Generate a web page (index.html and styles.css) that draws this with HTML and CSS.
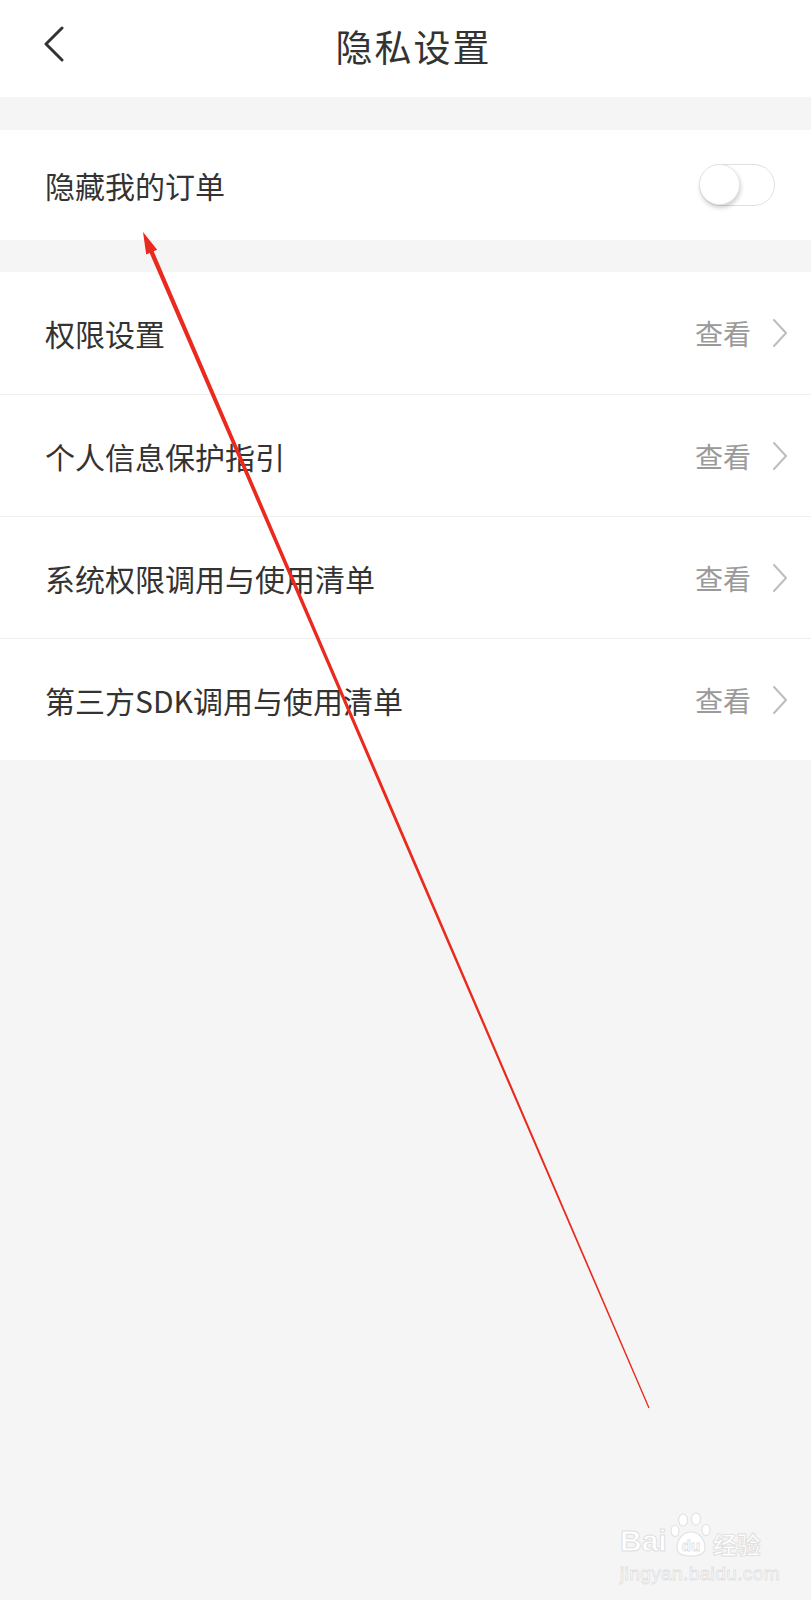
FILE: index.html
```html
<!DOCTYPE html>
<html lang="zh-CN">
<head>
<meta charset="utf-8">
<title>隐私设置</title>
<link rel="stylesheet" href="styles.css">
</head>
<body>
<div class="page">
  <header class="topbar">
    <svg class="back" width="24" height="36" viewBox="0 0 24 36"><polyline points="21,2 5,18 21,34" fill="none" stroke="#333" stroke-width="3" stroke-linecap="round" stroke-linejoin="round"/></svg>
    <h1 class="title">隐私设置</h1>
  </header>

  <section class="group group-first">
    <div class="row">
      <span class="label">隐藏我的订单</span>
      <span class="switch"><span class="knob"></span></span>
    </div>
  </section>

  <section class="group">
    <div class="row row-link">
      <span class="label">权限设置</span>
      <span class="action">查看<svg class="chev" width="16" height="30" viewBox="0 0 16 30"><polyline points="2,2 14,15 2,28" fill="none" stroke="#bdbdbd" stroke-width="2" stroke-linecap="round" stroke-linejoin="round"/></svg></span>
    </div>
    <div class="row row-link">
      <span class="label">个人信息保护指引</span>
      <span class="action">查看<svg class="chev" width="16" height="30" viewBox="0 0 16 30"><polyline points="2,2 14,15 2,28" fill="none" stroke="#bdbdbd" stroke-width="2" stroke-linecap="round" stroke-linejoin="round"/></svg></span>
    </div>
    <div class="row row-link">
      <span class="label">系统权限调用与使用清单</span>
      <span class="action">查看<svg class="chev" width="16" height="30" viewBox="0 0 16 30"><polyline points="2,2 14,15 2,28" fill="none" stroke="#bdbdbd" stroke-width="2" stroke-linecap="round" stroke-linejoin="round"/></svg></span>
    </div>
    <div class="row row-link">
      <span class="label">第三方SDK调用与使用清单</span>
      <span class="action">查看<svg class="chev" width="16" height="30" viewBox="0 0 16 30"><polyline points="2,2 14,15 2,28" fill="none" stroke="#bdbdbd" stroke-width="2" stroke-linecap="round" stroke-linejoin="round"/></svg></span>
    </div>
  </section>

  <svg class="annotation" width="811" height="1600" viewBox="0 0 811 1600">
    <polygon points="143,232 157.2,249.8 153.7,251.3 649.6,1407.8 648.4,1408.2 149.7,253.1 146.2,254.6" fill="#ea2a1f"/>
  </svg>

  <div class="watermark">
    <div class="wm-top">
      <span class="wm-bai">Bai</span>
      <svg class="wm-paw" width="44" height="46" viewBox="0 0 44 46">
        <g fill="#fff" stroke="#e2e2e2" stroke-width="1.2">
          <ellipse cx="14" cy="8" rx="4.5" ry="6"/>
          <ellipse cx="27" cy="7" rx="4.5" ry="6"/>
          <ellipse cx="6" cy="19" rx="4" ry="5.5"/>
          <ellipse cx="37" cy="18" rx="4" ry="5.5"/>
          <path d="M8 36 C8 26 15 20 22 20 C29 20 36 26 36 36 C36 42 30 44 22 44 C14 44 8 42 8 36 Z"/>
        </g>
        <text x="22" y="39" text-anchor="middle" class="wm-du">du</text>
      </svg>
      <span class="wm-jy">经验</span>
    </div>
    <div class="wm-url">jingyan.baidu.com</div>
  </div>
</div>
</body>
</html>
```

FILE: styles.css
```css
* { box-sizing: border-box; }
html, body { margin: 0; padding: 0; }
body {
  background: #f5f5f5;
  font-family: "Noto Sans CJK SC", "Noto Sans", sans-serif;
  color: #333;
}
.page {
  position: relative;
  width: 811px;
  height: 1600px;
  overflow: hidden;
  background: #f5f5f5;
}
.topbar {
  position: relative;
  height: 97px;
  background: #fff;
  display: flex;
  align-items: center;
  justify-content: center;
  padding-bottom: 6px;
}
.back {
  position: absolute;
  left: 41px;
  top: 26px;
}
.title {
  margin: 0 0 0 16px;
  font-size: 37px;
  font-weight: 400;
  color: #333;
  letter-spacing: 2px;
}
.group {
  background: #fff;
  margin-top: 32px;
}
.group-first { margin-top: 33px; }
.row {
  height: 110px;
  display: flex;
  align-items: center;
  justify-content: space-between;
  padding: 0 36px 0 45px;
}
.row-link {
  height: 122px;
  padding-right: 23px;
  border-top: 1px solid #efefef;
}
.row-link:first-child { border-top: none; }
.label {
  font-size: 30px;
  color: #333;
}
.action {
  display: flex;
  align-items: center;
  gap: 21px;
  font-size: 28px;
  color: #9a9a9a;
}
.chev { display: block; }
.switch {
  position: relative;
  width: 76px;
  height: 42px;
  border-radius: 21px;
  border: 1.5px solid #e0e0e0;
  background: #fff;
}
.knob {
  position: absolute;
  left: -1px;
  top: -1px;
  width: 41px;
  height: 41px;
  border-radius: 50%;
  background: #fff;
  border: 1px solid #e6e6e6;
  box-shadow: 1px 3px 4px rgba(0,0,0,0.18);
}
.annotation {
  position: absolute;
  left: 0;
  top: 0;
  pointer-events: none;
}
.watermark {
  position: absolute;
  left: 620px;
  top: 1510px;
  width: 150px;
  color: #fff;
  font-family: "Liberation Sans", Arial, sans-serif;
}
.wm-top {
  display: flex;
  align-items: flex-end;
  height: 48px;
}
.wm-bai {
  font-size: 30px;
  font-weight: 700;
  line-height: 1;
  margin-bottom: 2px;
  -webkit-text-stroke: 1px #e0e0e0;
  color: #fff;
}
.wm-paw { display: block; margin-left: 2px; }
.wm-du {
  font-family: "Liberation Sans", Arial, sans-serif;
  font-size: 15px;
  font-weight: 700;
  fill: #fff;
  stroke: #e0e0e0;
  stroke-width: 0.8px;
}
.wm-jy {
  font-family: "Noto Sans CJK SC", sans-serif;
  font-size: 24px;
  font-weight: 700;
  line-height: 1;
  margin-bottom: 2px;
  -webkit-text-stroke: 1px #e0e0e0;
  color: #fff;
}
.wm-url {
  font-size: 19px;
  line-height: 1;
  margin-top: 6px;
  letter-spacing: 0.4px;
  color: #fff;
  -webkit-text-stroke: 0.8px #e0e0e0;
}
```
